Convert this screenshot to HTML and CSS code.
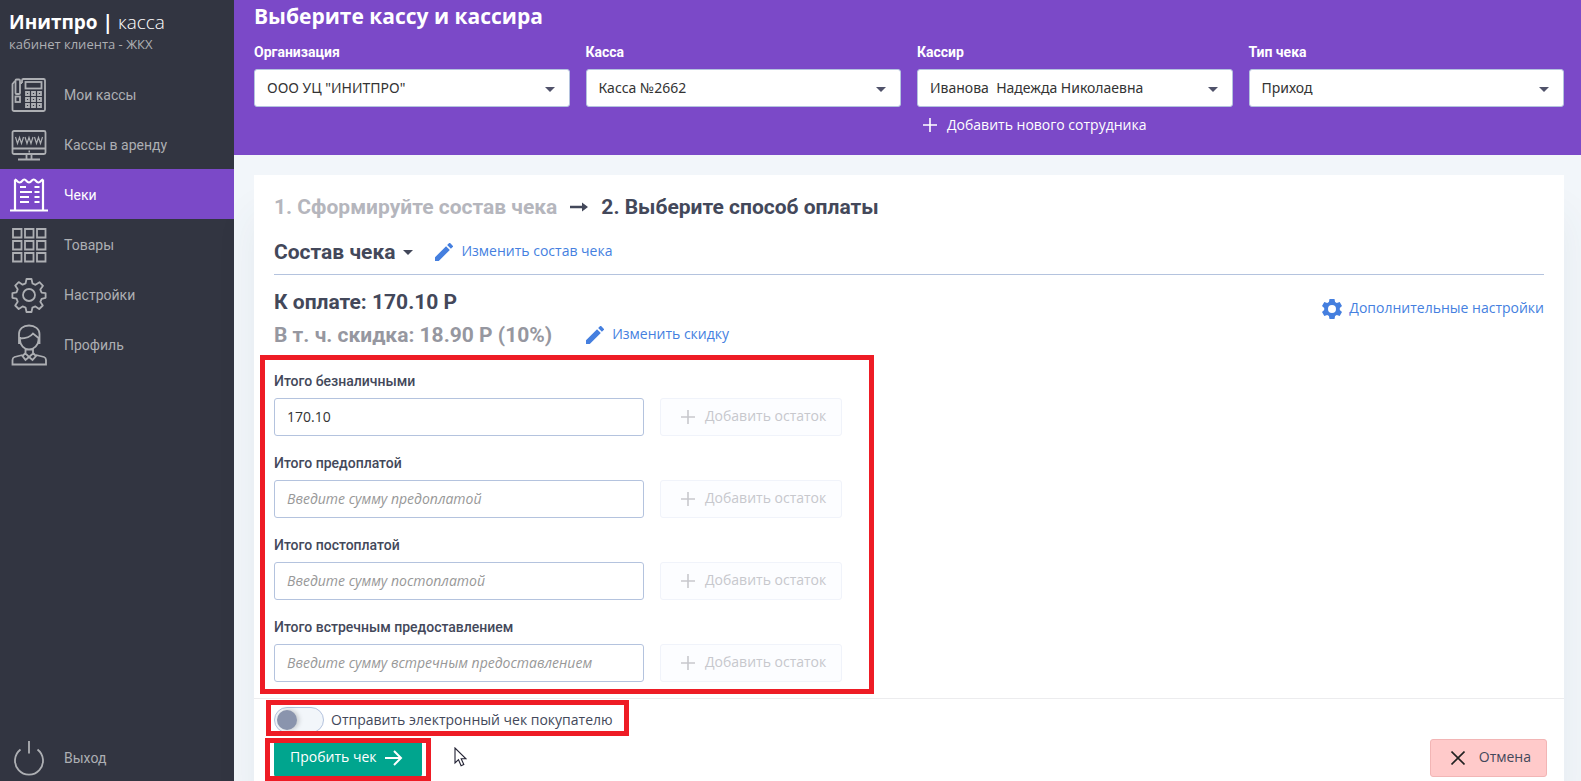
FILE: index.html
```html
<!DOCTYPE html>
<html lang="ru">
<head>
<meta charset="utf-8">
<title>Инитпро | касса</title>
<link rel="stylesheet" href="styles.css">
</head>
<body>
<svg class="sprite" aria-hidden="true">
  <symbol id="plus" viewBox="0 0 14 14"><path d="M7 0v14M0 7h14" fill="none" stroke="currentColor" stroke-width="1.6"/></symbol>
  <symbol id="caret" viewBox="0 0 10 5"><path d="M0 0h10L5 5z" fill="currentColor"/></symbol>
  <symbol id="pencil" viewBox="3 3 18 18"><path fill="currentColor" d="M3 17.25V21h3.75L17.81 9.94l-3.75-3.75L3 17.25zM20.71 7.04a1 1 0 0 0 0-1.41l-2.34-2.34a1 1 0 0 0-1.41 0l-1.83 1.83 3.75 3.75 1.83-1.83z"/></symbol>
</svg>
<div class="shell">
  <aside class="sidebar">
    <div class="brand"><b>Инитпро |</b> <span class="brand-light">касса</span></div>
    <div class="brand-sub">кабинет клиента - ЖКХ</div>
    <nav class="nav">
      <a class="nav-item" href="#">
        <svg class="nav-icon" viewBox="0 0 36 36"><path d="M11 6V3.500a1.500 1.500 0 0 1 1.500-1.500H32.500a1.500 1.500 0 0 1 1.500 1.500V32.500a1.500 1.500 0 0 1-1.500 1.500H3a1.500 1.500 0 0 1-1.500-1.500V7l2.500-3M11 6h-2"/><rect x="4.500" y="2.500" width="4.500" height="14.500" rx="1"/><rect x="4.500" y="19.500" width="4.500" height="5.500"/><rect x="14.500" y="5" width="16" height="6.500"/><path d="M15 15h3v3h-3zM21 15h3v3h-3zM27 15h3v3h-3zM15 21h3v3h-3zM21 21h3v3h-3zM27 21h3v3h-3zM15 27h3v3h-3zM21 27h3v3h-3zM27 27h3v3h-3z"/></svg>
        <span>Мои кассы</span></a>
      <a class="nav-item" href="#">
        <svg class="nav-icon" viewBox="0 0 36 36"><rect x="1.500" y="4" width="33" height="23" rx="1.500"/><path d="M1.500 21.500h33M15.500 27v5M20.500 27v5M7 32.500h22M17.500 24.500h1.500"/><path stroke-width="1.200" d="M4.500 10l2 6.500 2-6 2 6 2-6.500M14 10l2 6.500 2-6 2 6 2-6.500M23.500 10l2 6.500 2-6 2 6 2-6.500"/></svg>
        <span>Кассы в аренду</span></a>
      <a class="nav-item is-active" href="#" aria-current="page">
        <svg class="nav-icon nav-icon-wide" viewBox="0 0 38 36"><path stroke-width="2.200" d="M5 33V2.500M33 33V2.500M5 2.500c2 0 2 3 4.700 3s2.300-3 4.600-3 2 3 4.700 3 2.300-3 4.700-3 2 3 4.600 3 2.700-3 4.700-3M0 33.500h38"/><path d="M10 10h6M24.500 10h5M10 15h12M24.500 15h5M10 20h9M24.500 20h5M10 25h9M24.500 25h5"/></svg>
        <span>Чеки</span></a>
      <a class="nav-item" href="#">
        <svg class="nav-icon" viewBox="0 0 36 36"><path d="M2 2h8.500v8.500H2zM14 2h8.500v8.500H14zM26 2h8.500v8.500H26zM2 14h8.500v8.500H2zM14 14h8.500v8.500H14zM26 14h8.500v8.500H26zM2 26h8.500v8.500H2zM14 26h8.500v8.500H14zM26 26h8.500v8.500H26z"/></svg>
        <span>Товары</span></a>
      <a class="nav-item" href="#">
        <svg class="nav-icon" viewBox="0 0 36 36"><circle cx="18" cy="18" r="6"/><path stroke-linejoin="round" d="M15.500 2h5l1 4.500 3 1.300L28.500 5.200l3.500 3.600-2.700 3.800 1.300 3 4 .600v4.600l-4 1-1.300 3 2.500 3.700-3.600 3.500-3.800-2.600-3 1.200-.900 4.400h-5l-.900-4.400-3-1.200-3.900 2.600-3.500-3.500 2.500-3.800-1.200-3-4.100-.900v-4.600l4.100-.900 1.200-3-2.500-3.700 3.500-3.500 3.900 2.600 3-1.300z"/></svg>
        <span>Настройки</span></a>
      <a class="nav-item" href="#">
        <svg class="nav-icon nav-icon-tall" viewBox="0 0 36 42"><path d="M8 20V10c0-5 4-8.500 10-8.500S28.500 5 28.500 10v10M9 14.500c6 0 10-1 13-5l5.500 4.500M9 13v3c0 5 4 9.500 9 9.500s9.500-4.500 9.500-9.500v-3M14.500 25v4.500L18 33l4-3.500V25M14.500 29l-3 3 3 4 3.500-3 3.500 3 3.500-4-3-3M11.500 31L3.500 33c-1.500.500-2 1.500-2 3v4.500h33.500V36c0-1.500-.500-2.500-2-3l-8-2"/></svg>
        <span>Профиль</span></a>
    </nav>
    <a class="nav-item nav-exit" href="#">
      <svg class="nav-icon" viewBox="0 0 36 36"><path d="M18 1v12.500M9.500 9.500a14 14 0 1 0 17 0"/></svg>
      <span>Выход</span></a>
  </aside>

  <main class="main">
    <header class="picker">
      <h1 class="picker-title">Выберите кассу и кассира</h1>
      <div class="picker-grid">
        <div class="pick">
          <label for="org">Организация</label>
          <div class="select"><select id="org"><option>ООО УЦ "ИНИТПРО"</option></select><svg class="select-caret"><use href="#caret"/></svg></div>
        </div>
        <div class="pick">
          <label for="kassa">Касса</label>
          <div class="select"><select id="kassa"><option>Касса №2662</option></select><svg class="select-caret"><use href="#caret"/></svg></div>
        </div>
        <div class="pick">
          <label for="cashier">Кассир</label>
          <div class="select"><select id="cashier"><option>Иванова&nbsp; Надежда Николаевна</option></select><svg class="select-caret"><use href="#caret"/></svg></div>
          <button class="add-staff" type="button"><svg class="icon-plus"><use href="#plus"/></svg>Добавить нового сотрудника</button>
        </div>
        <div class="pick">
          <label for="type">Тип чека</label>
          <div class="select"><select id="type"><option>Приход</option></select><svg class="select-caret"><use href="#caret"/></svg></div>
        </div>
      </div>
    </header>

    <section class="card">
      <div class="card-body">
        <h2 class="steps"><span class="step-done">1. Сформируйте состав чека</span>
          <svg class="step-arrow" viewBox="0 0 18 10"><path d="M0 3.800h12V.500L18 5l-6 4.500V6.200H0z" fill="currentColor"/></svg>
          <span>2. Выберите способ оплаты</span></h2>
        <div class="contents">
          <button class="contents-toggle" type="button">Состав чека<svg class="caret"><use href="#caret"/></svg></button>
          <a class="link" href="#"><svg class="icon-pencil"><use href="#pencil"/></svg><span class="link-text">Изменить состав чека</span></a>
        </div>
        <div class="totals">
          <div>
            <p class="total">К оплате: 170.10 Р</p>
            <div class="discount"><p class="total total-muted">В т. ч. скидка: 18.90 Р (10%)</p>
              <a class="link" href="#"><svg class="icon-pencil"><use href="#pencil"/></svg><span class="link-text">Изменить скидку</span></a></div>
          </div>
          <a class="link link-settings" href="#"><svg class="icon-gear" viewBox="2 2 20 20"><path fill="currentColor" fill-rule="evenodd" d="M9.500 2h5l.600 3 1.700 1 2.900-1 2.300 4-2.200 2v2l2.200 2-2.300 4-2.900-1-1.700 1-.600 3h-5l-.600-3-1.700-1-2.900 1L2 15l2.200-2v-2L2 9l2.300-4 2.900 1 1.700-1zM12 8a4 4 0 1 0 0 8 4 4 0 0 0 0-8z"/></svg><span class="link-text">Дополнительные настройки</span></a>
        </div>

        <form class="fields">
          <div class="field">
            <label for="cashless">Итого безналичными</label>
            <div class="field-row"><input id="cashless" type="text" value="170.10"><button class="rest" type="button" disabled><svg class="icon-plus"><use href="#plus"/></svg><span class="link-text">Добавить остаток</span></button></div>
          </div>
          <div class="field">
            <label for="prepaid">Итого предоплатой</label>
            <div class="field-row"><input id="prepaid" type="text" placeholder="Введите сумму предоплатой"><button class="rest" type="button" disabled><svg class="icon-plus"><use href="#plus"/></svg><span class="link-text">Добавить остаток</span></button></div>
          </div>
          <div class="field">
            <label for="postpaid">Итого постоплатой</label>
            <div class="field-row"><input id="postpaid" type="text" placeholder="Введите сумму постоплатой"><button class="rest" type="button" disabled><svg class="icon-plus"><use href="#plus"/></svg><span class="link-text">Добавить остаток</span></button></div>
          </div>
          <div class="field">
            <label for="counter">Итого встречным предоставлением</label>
            <div class="field-row"><input id="counter" type="text" placeholder="Введите сумму встречным предоставлением"><button class="rest" type="button" disabled><svg class="icon-plus"><use href="#plus"/></svg><span class="link-text">Добавить остаток</span></button></div>
          </div>
          <div class="mark mark-fields"></div>
        </form>
      </div>

      <footer class="card-footer">
        <div class="send"><label class="send-label"><input class="switch" type="checkbox" role="switch">Отправить электронный чек покупателю</label><div class="mark mark-send"></div></div>
        <div class="actions">
          <div class="submit-wrap">
            <button class="btn btn-submit" type="button"><span class="link-text">Пробить чек</span><svg class="icon-arrow" viewBox="0 0 18 16"><path d="M0 8h16M9 1l7 7-7 7" fill="none" stroke="currentColor" stroke-width="2"/></svg></button>
            <div class="mark mark-submit"></div>
            <svg class="cursor" viewBox="0 0 13 20"><path d="M1 1v15l3.500-3.300 2.600 6 2.700-1.200-2.600-5.700H12z" fill="#fff" stroke="#223" stroke-width="1.100"/></svg>
          </div>
          <button class="btn btn-cancel" type="button"><svg class="icon-x" viewBox="0 0 14 14"><path d="M.500.500l13 13M13.500.500l-13 13" fill="none" stroke="currentColor" stroke-width="1.600"/></svg><span class="link-text">Отмена</span></button>
        </div>
      </footer>
    </section>
  </main>
</div>
</body>
</html>
```
FILE: styles.css
```css
* { box-sizing: border-box; }
body {
  margin: 0;
  font-family: "Open Sans", "Noto Sans", sans-serif;
  font-size: 14px;
  line-height: 20px;
  color: #43485a;
  background: #f2f6fa;
}
h1, h2, p { margin: 0; }
a { color: inherit; text-decoration: none; }
button, input, select { font: inherit; color: inherit; }
button { background: none; border: 0; padding: 0; cursor: pointer; }
svg { flex: none; }
.sprite { display: none; }

.shell { display: flex; min-height: 100vh; }

/* Sidebar */
.sidebar {
  flex: none;
  width: 234px;
  display: flex;
  flex-direction: column;
  padding-top: 8px;
  background: #323541;
  color: #adafb3;
}
.brand { padding-left: 9px; font-size: 19px; line-height: 28px; color: #fff; }
.brand-light { font-weight: 300; }
.brand-sub { padding-left: 9px; font-size: 13px; line-height: 16px; }
.nav { margin-top: 17px; }
.nav-item {
  display: flex;
  align-items: center;
  height: 50px;
  padding: 2px 0 0 64px;
  position: relative;
  font-family: Roboto, sans-serif;
}
.nav-item.is-active { background: #7b49c8; color: #fff; }
.nav-exit { margin-top: auto; height: 46px; padding-top: 0; }
.nav-icon {
  position: absolute;
  left: 11px;
  width: 36px;
  height: 36px;
  fill: none;
  stroke: currentColor;
  stroke-width: 1.8;
}
.nav-icon-wide { left: 10px; width: 38px; }
.nav-icon-tall { height: 42px; }

/* Header */
.main { flex: 1; min-width: 0; display: flex; flex-direction: column; }
.picker { min-height: 155px; padding: 1px 17px 0 20px; background: #7b49c8; color: #fff; }
.picker-title { font-size: 21px; line-height: 30px; font-weight: 700; }
.picker-grid { display: grid; grid-template-columns: repeat(4, 1fr); gap: 16px; margin-top: 11px; }
.pick label { display: block; margin-bottom: 7px; font-family: Roboto, sans-serif; font-weight: 700; }
.select { position: relative; }
.select select {
  display: block;
  width: 100%;
  height: 38px;
  padding: 0 32px 0 12px;
  appearance: none;
  background: #fff;
  border: 1px solid #b4c3de;
  border-radius: 3px;
  font-family: "Noto Sans", sans-serif;
  color: #333;
}
.select-caret { position: absolute; right: 15px; top: 18px; width: 10px; height: 5px; color: #50526a; pointer-events: none; }
.add-staff { display: flex; align-items: center; gap: 10px; padding: 8px 0 0 6px; }
.icon-plus { width: 14px; height: 14px; }

/* Card */
.card {
  flex: 1;
  display: flex;
  flex-direction: column;
  margin: 20px 17px 0 20px;
  background: #fff;
  box-shadow: 0 40px 40px rgba(60, 80, 100, 0.07);
}
.card-body { padding: 17px 20px 16px; }
.steps, .contents-toggle, .total {
  font-family: Roboto, sans-serif;
  font-size: 21px;
  line-height: 30px;
  font-weight: 700;
}
.contents-toggle { font-size: 20px; }
.steps { display: flex; align-items: center; gap: 13px; }
.step-done { color: #b5b6bd; }
.step-arrow { width: 18px; height: 10px; }
.contents {
  display: flex;
  align-items: center;
  gap: 22px;
  margin-top: 15px;
  padding-bottom: 7px;
  border-bottom: 1px solid #b4c3de;
}
.contents-toggle { display: flex; align-items: center; gap: 8px; }
.contents-toggle { font-size: 21px; }
.caret { width: 10px; height: 5px; }
.link { display: flex; align-items: center; gap: 8px; color: #457fdf; }
.link-text { padding-bottom: 2px; }
.icon-pencil { width: 18px; height: 18px; }
.icon-gear { width: 20px; height: 20px; }
.totals { display: flex; justify-content: space-between; align-items: flex-start; padding-top: 12px; }
.link-settings { margin-top: 11px; gap: 7px; }
.total-muted { color: #9697a0; }
.discount { display: flex; gap: 34px; margin-top: 3px; }

.fields { position: relative; width: max-content; max-width: 100%; margin-top: 21px; display: grid; gap: 17px; }
.field label { display: block; margin-bottom: 7px; font-family: Roboto, sans-serif; font-weight: 500; }
.field-row { display: flex; gap: 16px; }
.field-row input {
  width: 370px;
  height: 38px;
  padding: 0 12px 2px;
  border: 1px solid #b4c3de;
  border-radius: 3px;
  background: #fff;
  color: #333;
}
.field-row input::placeholder { color: #989898; font-style: italic; opacity: 1; }
.rest {
  display: flex;
  align-items: center;
  gap: 10px;
  width: 182px;
  height: 38px;
  padding-left: 20px;
  border: 1px solid #f0f3fa;
  border-radius: 3px;
  background: #fcfdff;
  color: #c7c8cd;
}

/* Footer */
.card-footer { padding: 8px 17px 4px 20px; border-top: 1px solid #ececee; }
.send { position: relative; width: max-content; }
.send-label { display: flex; align-items: center; gap: 7px; height: 26px; }
.switch {
  appearance: none;
  width: 50px;
  height: 26px;
  margin: 0;
  border: 1px solid #b4c3de;
  border-radius: 13px;
  background: #f2f6fa;
  display: flex;
  align-items: center;
  padding: 2px;
}
.switch::before {
  content: "";
  width: 20px;
  height: 20px;
  border-radius: 50%;
  background: #8a94ad;
  box-shadow: 2px 0 5px rgba(0, 0, 0, 0.2);
}
.switch:checked::before { margin-left: auto; }
.actions { display: flex; justify-content: space-between; margin-top: 6px; }
.submit-wrap { position: relative; }
.btn { display: flex; align-items: center; height: 38px; border-radius: 3px; }
.btn-submit { gap: 9px; padding: 0 19px 0 16px; background: #00a58e; color: #fff; }
.btn-cancel { gap: 14px; padding: 0 15px 0 20px; border: 1px solid #f2b5b5; background: #ffcaca; }
.icon-arrow { width: 18px; height: 16px; }
.icon-x { width: 14px; height: 14px; color: #222; }

/* Highlight frames */
.mark { position: absolute; border: 5px solid #ee1c25; pointer-events: none; }
.mark-fields { inset: -16px -32px -12px -14px; }
.mark-send { inset: -7px -16px -3px -8px; }
.mark-submit { inset: -1px -9px -4px -9px; }
.cursor { position: absolute; left: calc(100% + 32px); top: 8px; width: 13px; height: 20px; }
```
